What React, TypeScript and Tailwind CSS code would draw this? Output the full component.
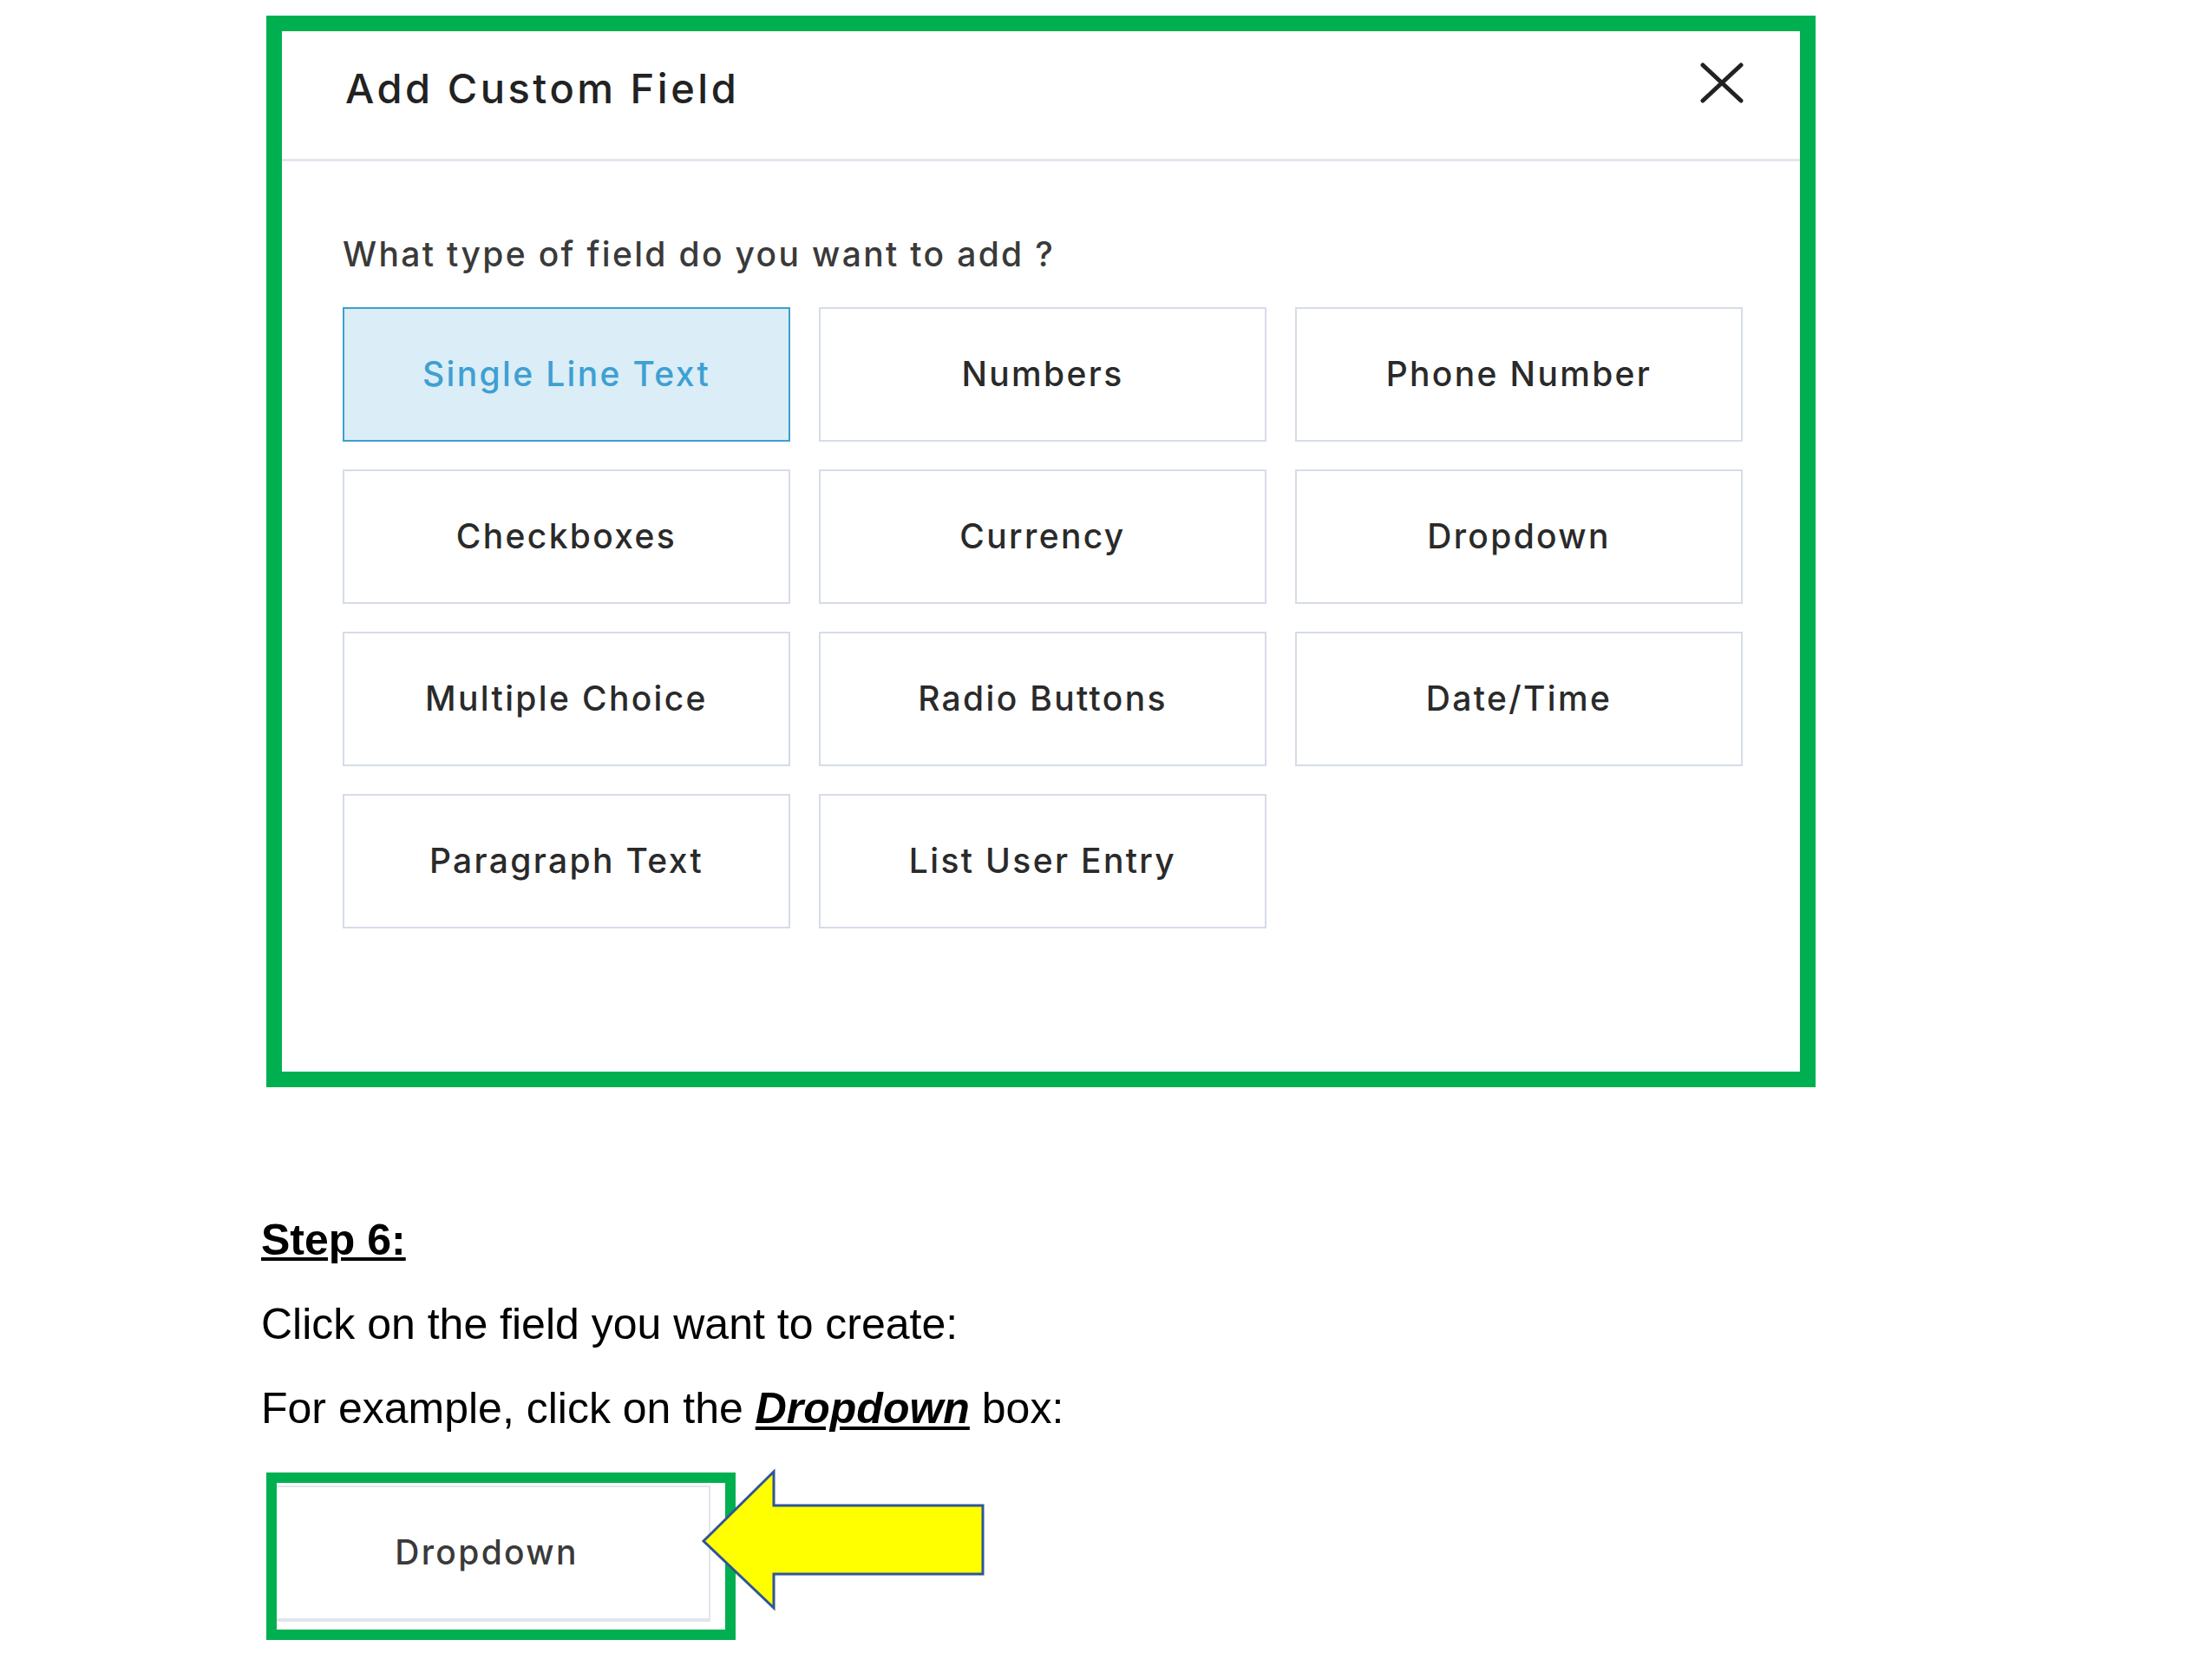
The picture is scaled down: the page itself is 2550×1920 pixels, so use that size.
const fields = [
  "Single Line Text",
  "Numbers",
  "Phone Number",
  "Checkboxes",
  "Currency",
  "Dropdown",
  "Multiple Choice",
  "Radio Buttons",
  "Date/Time",
  "Paragraph Text",
  "List User Entry",
];

const ui = { fontFamily: "Inter, 'Noto Sans', sans-serif" };
const doc = { fontFamily: "'Liberation Sans', Arial, sans-serif" };

function FieldCard({ label, selected }: { label: string; selected?: boolean }) {
  return (
    <div
      className={
        selected
          ? "h-[155px] flex items-center justify-center border-2 border-[#3d9fd0] bg-[#dbedf6] text-[#3ea0d2] text-[39px] font-medium tracking-[0.06em]"
          : "h-[155px] flex items-center justify-center border-2 border-[#d6dce8] bg-white text-[#2a2a2a] text-[39px] font-medium tracking-[0.06em]"
      }
    >
      {label}
    </div>
  );
}

function CloseIcon() {
  return (
    <svg width="52" height="47" viewBox="0 0 52 47" className="mt-[36px]">
      <path d="M4 3 L48 44 M48 3 L4 44" stroke="#222" strokeWidth="5" strokeLinecap="round" />
    </svg>
  );
}

export default function App() {
  return (
    <div className="w-[2550px] min-h-[1920px] bg-white">
      {/* Modal screenshot */}
      <div className="ml-[307px] mt-[18px] w-[1786px] border-[18px] border-[#00b050] bg-white" style={ui}>
        <div className="h-[147px] flex justify-between items-start pl-[73px] pr-[64px]">
          <h2 className="pt-[38px] text-[47px] leading-[56px] font-medium text-[#222] tracking-[0.075em]">Add Custom Field</h2>
          <CloseIcon />
        </div>
        <div className="h-[3px] bg-[#e1e6ef]"></div>

        <div className="pl-[70px] pt-[84px] pb-[165px]">
          <p className="text-[39px] leading-[45px] font-medium text-[#3a3a3a] tracking-[0.06em]">What type of field do you want to add ?</p>
          <div className="mt-[39px] grid grid-cols-[516px_516px_516px] gap-x-[33px] gap-y-[32px]">
            {fields.map((f, i) => (
              <FieldCard key={f} label={f} selected={i === 0} />
            ))}
          </div>
        </div>
      </div>

      {/* Document text */}
      <div className="ml-[301px] mt-[146px] flex flex-col gap-[37px] text-[50px] leading-[60px] text-black" style={doc}>
        <p className="font-bold underline decoration-[4px] underline-offset-[3px]">Step 6:</p>
        <p>Click on the field you want to create:</p>
        <p>
          For example, click on the{" "}
          <span className="font-bold italic underline decoration-[4px] underline-offset-[4px]">Dropdown</span> box:
        </p>
      </div>

      {/* Cropped dropdown box with arrow */}
      <div className="relative ml-[307px] mt-[44px] w-[541px] border-[12px] border-[#00b050] bg-white" style={ui}>
        <div className="pt-[3px] pr-[17px] pb-[9px]">
          <div className="h-[157px] flex items-center justify-center pr-[14px] border-t-2 border-r-2 border-b-[4px] border-[#e1e5ee] text-[39px] font-medium text-[#3a3a3a] tracking-[0.06em]">
            Dropdown
          </div>
        </div>
        <svg
          className="absolute left-[486px] top-[-18px]"
          width="340"
          height="170"
          viewBox="0 0 340 170"
        >
          <polygon
            points="6,85 87,5 87,44 328,44 328,123 87,123 87,162"
            fill="#ffff00"
            stroke="#2f5597"
            strokeWidth="3"
            strokeLinejoin="miter"
          />
        </svg>
      </div>
    </div>
  );
}
